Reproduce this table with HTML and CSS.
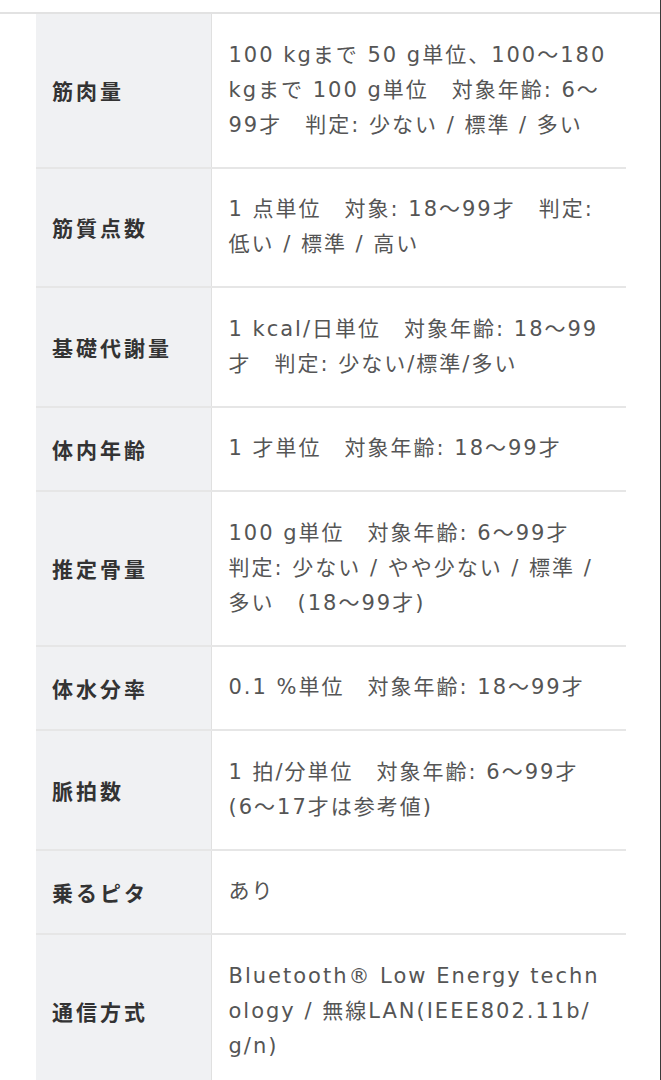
FILE: index.html
```html
<!DOCTYPE html>
<html lang="ja">
<head>
<meta charset="utf-8">
<title>仕様</title>
<link rel="stylesheet" href="styles.css">
</head>
<body>
<div class="page">
  <div class="top-rule"></div>
  <table class="spec">
    <colgroup>
      <col class="col-head">
      <col class="col-body">
    </colgroup>
    <tbody>
      <tr><th>筋肉量</th><td>100 kgまで 50 g単位、100〜180 kgまで 100 g単位　対象年齢: 6〜99才　判定: 少ない / 標準 / 多い</td></tr>
      <tr><th>筋質点数</th><td>1 点単位　対象: 18〜99才　判定: 低い / 標準 / 高い</td></tr>
      <tr><th>基礎代謝量</th><td>1 kcal/日単位　対象年齢: 18〜99才　判定: 少ない/標準/多い</td></tr>
      <tr><th>体内年齢</th><td>1 才単位　対象年齢: 18〜99才</td></tr>
      <tr><th>推定骨量</th><td>100 g単位　対象年齢: 6〜99才　判定: 少ない / やや少ない / 標準 / 多い　(18〜99才)</td></tr>
      <tr><th>体水分率</th><td>0.1 %単位　対象年齢: 18〜99才</td></tr>
      <tr><th>脈拍数</th><td>1 拍/分単位　対象年齢: 6〜99才　(6〜17才は参考値)</td></tr>
      <tr><th>乗るピタ</th><td>あり</td></tr>
      <tr><th>通信方式</th><td>Bluetooth® Low Energy technology / 無線LAN(IEEE802.11b/g/n)</td></tr>
    </tbody>
  </table>
</div>
</body>
</html>
```
FILE: styles.css
```css
html, body {
  margin: 0;
  padding: 0;
  background: #ffffff;
}

.page {
  width: 660px;
  min-height: 1080px;
  border-right: 1px solid #3a3a3a;
  overflow: hidden;
}

.top-rule {
  height: 12px;
  border-bottom: 2px solid #e2e2e2;
}

.spec {
  margin-left: 36px;
  width: 590px;
  border-collapse: collapse;
  table-layout: fixed;
}

.col-head {
  width: 175px;
}

.spec tr {
  border-bottom: 2px solid #e6e6e6;
}

.spec th {
  background: #f0f1f3;
  border-right: 1px solid #e0e0e0;
  text-align: left;
  vertical-align: middle;
  padding: 0 0 0 16px;
  font-family: "Noto Sans CJK JP", sans-serif;
  font-weight: 700;
  font-size: 21px;
  letter-spacing: 3px;
  color: #333333;
}

.spec td {
  padding: 23.5px 18px 24px 17px;
  vertical-align: middle;
  font-family: "DejaVu Sans", "Noto Sans CJK JP", sans-serif;
  font-weight: 400;
  font-size: 21px;
  line-height: 35px;
  letter-spacing: 2px;
  color: #555555;
  word-break: break-all;
}
```
